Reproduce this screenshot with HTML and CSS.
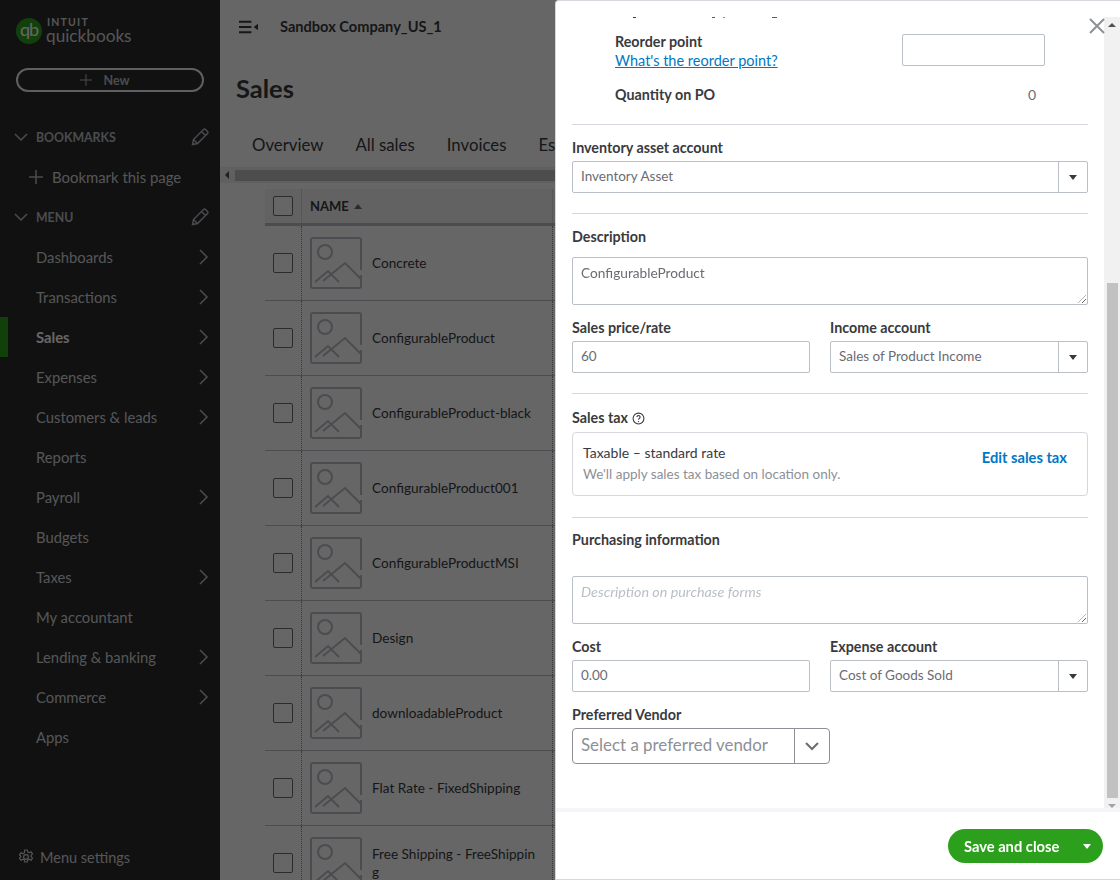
FILE: index.html
```html
<!DOCTYPE html>
<html lang="en">
<head>
    <meta charset="UTF-8">
    <title>Sales - QuickBooks</title>
    <link rel="stylesheet" href="styles.css">
</head>
<body>
    <svg class="defs" width="0" height="0">
        <symbol id="placeholder" viewBox="0 0 52 52">
            <path d="M51 33V3a2 2 0 0 0-2-2H3a2 2 0 0 0-2 2v46a2 2 0 0 0 2 2h46a2 2 0 0 0 2-2V38" fill="none" stroke="currentColor" stroke-width="2"/>
            <circle cx="15" cy="15" r="7" fill="none" stroke="currentColor" stroke-width="2"/>
            <path d="M5 45l13-11 11 11M13 44l22-18 16 16" fill="none" stroke="currentColor" stroke-width="2"/>
        </symbol>
        <symbol id="chev-right" viewBox="0 0 12 18">
            <path d="M2 2l7 7-7 7" fill="none" stroke="currentColor" stroke-width="1.500"/>
        </symbol>
        <symbol id="chev-down" viewBox="0 0 16 10">
            <path d="M2 2l6 6 6-6" fill="none" stroke="currentColor" stroke-width="1.500"/>
        </symbol>
        <symbol id="pencil" viewBox="0 0 18 18">
            <path d="M1.5 16.500l1-5L12.500 1.500a1.500 1.500 0 0 1 2 0l2 2a1.500 1.500 0 0 1 0 2L6.500 15.500zM2.500 11.500l4 4M10.500 3.500l4 4" fill="none" stroke="currentColor" stroke-width="1.400"/>
        </symbol>
    </svg>

    <div class="app">
        <nav class="sidebar">
            <div class="logo">
                <span class="logo-mark">qb</span>
                <div class="logo-text">
                    <span class="logo-intuit">INTUIT</span>
                    <span class="logo-name">quickbooks</span>
                </div>
            </div>
            <button class="new-button">
                <svg class="new-plus" viewBox="0 0 12 12"><path d="M6 0v12M0 6h12" fill="none" stroke="currentColor"/></svg>
                New
            </button>

            <div class="nav-head"><svg class="nav-down"><use href="#chev-down"/></svg><span>BOOKMARKS</span><svg class="nav-pencil"><use href="#pencil"/></svg></div>
            <div class="nav-bookmark">
                <svg class="bookmark-plus" viewBox="0 0 14 14"><path d="M7 0v14M0 7h14" fill="none" stroke="currentColor" stroke-width="1.500"/></svg>
                Bookmark this page
            </div>
            <div class="nav-head"><svg class="nav-down"><use href="#chev-down"/></svg><span>MENU</span><svg class="nav-pencil"><use href="#pencil"/></svg></div>

            <div class="nav-item">Dashboards<svg class="nav-arrow"><use href="#chev-right"/></svg></div>
            <div class="nav-item">Transactions<svg class="nav-arrow"><use href="#chev-right"/></svg></div>
            <div class="nav-item active">Sales<svg class="nav-arrow"><use href="#chev-right"/></svg></div>
            <div class="nav-item">Expenses<svg class="nav-arrow"><use href="#chev-right"/></svg></div>
            <div class="nav-item">Customers &amp; leads<svg class="nav-arrow"><use href="#chev-right"/></svg></div>
            <div class="nav-item">Reports</div>
            <div class="nav-item">Payroll<svg class="nav-arrow"><use href="#chev-right"/></svg></div>
            <div class="nav-item">Budgets</div>
            <div class="nav-item">Taxes<svg class="nav-arrow"><use href="#chev-right"/></svg></div>
            <div class="nav-item">My accountant</div>
            <div class="nav-item">Lending &amp; banking<svg class="nav-arrow"><use href="#chev-right"/></svg></div>
            <div class="nav-item">Commerce<svg class="nav-arrow"><use href="#chev-right"/></svg></div>
            <div class="nav-item">Apps</div>

            <div class="nav-settings">
                <svg class="gear" viewBox="0 0 16 16">
                    <circle cx="8" cy="8" r="2.400" fill="none" stroke="currentColor" stroke-width="1.200"/>
                    <path d="M6.700 1h2.600l.4 2 1.500.7 1.800-1 1.500 2.200-1.400 1.500v1.200l1.400 1.500-1.500 2.200-1.800-1-1.500.7-.4 2H6.700l-.4-2-1.500-.7-1.800 1-1.500-2.200 1.400-1.500V7.400L1.500 5.900 3 3.700l1.800 1 1.500-.7z" fill="none" stroke="currentColor" stroke-width="1.200" stroke-linejoin="round"/>
                </svg>
                Menu settings
            </div>
        </nav>

        <main class="content">
            <div class="topbar">
                <svg class="menu-toggle" viewBox="0 0 20 14">
                    <path d="M0 1.500h13M0 7h13M0 12.500h13" fill="none" stroke="currentColor" stroke-width="2"/>
                    <path d="M20 3.500v7L15.500 7z" fill="currentColor"/>
                </svg>
                <span class="company">Sandbox Company_US_1</span>
            </div>
            <h1 class="page-title">Sales</h1>
            <div class="tabs">
                <span>Overview</span>
                <span>All sales</span>
                <span>Invoices</span>
                <span>Es</span>
            </div>
            <div class="hscroll"><span class="hscroll-arrow"></span><span class="hscroll-thumb"></span></div>

            <div class="table">
                <div class="table-head">
                    <span class="cell-check"><span class="checkbox"></span></span>
                    <span class="cell-name">NAME <span class="sort-arrow"></span></span>
                </div>
                <div class="table-row"><span class="cell-check"><span class="checkbox"></span></span><span class="cell-name"><svg class="thumb"><use href="#placeholder"/></svg><span class="name-text">Concrete</span></span></div>
                <div class="table-row"><span class="cell-check"><span class="checkbox"></span></span><span class="cell-name"><svg class="thumb"><use href="#placeholder"/></svg><span class="name-text">ConfigurableProduct</span></span></div>
                <div class="table-row"><span class="cell-check"><span class="checkbox"></span></span><span class="cell-name"><svg class="thumb"><use href="#placeholder"/></svg><span class="name-text">ConfigurableProduct-black</span></span></div>
                <div class="table-row"><span class="cell-check"><span class="checkbox"></span></span><span class="cell-name"><svg class="thumb"><use href="#placeholder"/></svg><span class="name-text">ConfigurableProduct001</span></span></div>
                <div class="table-row"><span class="cell-check"><span class="checkbox"></span></span><span class="cell-name"><svg class="thumb"><use href="#placeholder"/></svg><span class="name-text">ConfigurableProductMSI</span></span></div>
                <div class="table-row"><span class="cell-check"><span class="checkbox"></span></span><span class="cell-name"><svg class="thumb"><use href="#placeholder"/></svg><span class="name-text">Design</span></span></div>
                <div class="table-row"><span class="cell-check"><span class="checkbox"></span></span><span class="cell-name"><svg class="thumb"><use href="#placeholder"/></svg><span class="name-text">downloadableProduct</span></span></div>
                <div class="table-row"><span class="cell-check"><span class="checkbox"></span></span><span class="cell-name"><svg class="thumb"><use href="#placeholder"/></svg><span class="name-text">Flat Rate - FixedShipping</span></span></div>
                <div class="table-row"><span class="cell-check"><span class="checkbox"></span></span><span class="cell-name"><svg class="thumb"><use href="#placeholder"/></svg><span class="name-text">Free Shipping - FreeShipping</span></span></div>
            </div>
        </main>
    </div>

    <div class="scrim"></div>

    <!-- Product edit drawer -->
    <aside class="drawer">
        <button class="close-button">
            <svg viewBox="0 0 16 16"><path d="M1 1l14 14M15 1L1 15" fill="none" stroke="currentColor" stroke-width="2"/></svg>
        </button>
        <div class="drawer-body">
            <form class="form">
                <!-- tails of the row scrolled out of view -->
                <div class="cut-line"><span class="tail tail-dark"></span><span class="tail tail-link"></span><span class="tail tail-gray"></span><span class="tail tail-end"></span></div>

                <div class="stock-row reorder-row">
                    <div>
                        <div class="stock-label">Reorder point</div>
                        <a class="link">What's the reorder point?</a>
                    </div>
                    <input class="input reorder-input" type="text">
                </div>
                <div class="stock-row po-row">
                    <div class="stock-label">Quantity on PO</div>
                    <span class="po-value">0</span>
                </div>

                <hr class="divider po-divider">

                <label class="label">Inventory asset account</label>
                <div class="select"><span class="select-value">Inventory Asset</span><span class="select-caret"></span></div>

                <hr class="divider">

                <label class="label desc-label">Description</label>
                <div class="textarea">ConfigurableProduct<span class="grip"></span></div>

                <div class="two-col">
                    <div>
                        <label class="label">Sales price/rate</label>
                        <input class="input" type="text" value="60">
                    </div>
                    <div>
                        <label class="label">Income account</label>
                        <div class="select"><span class="select-value">Sales of Product Income</span><span class="select-caret"></span></div>
                    </div>
                </div>

                <hr class="divider">

                <label class="label tax-label">Sales tax
                    <svg class="help" viewBox="0 0 12 12">
                        <circle cx="6" cy="6" r="5" fill="none" stroke="currentColor"/>
                        <path d="M4.500 4.700a1.500 1.500 0 1 1 2.300 1.300c-.5.300-.8.600-.8 1.100" fill="none" stroke="currentColor"/>
                        <circle cx="6" cy="8.800" r=".6" fill="currentColor"/>
                    </svg>
                </label>
                <div class="tax-box">
                    <div class="tax-text">
                        <div class="tax-title">Taxable – standard rate</div>
                        <div class="tax-note">We'll apply sales tax based on location only.</div>
                    </div>
                    <a class="tax-edit">Edit sales tax</a>
                </div>

                <hr class="divider tax-divider">

                <label class="label purchase-label">Purchasing information</label>
                <div class="textarea placeholder">Description on purchase forms<span class="grip"></span></div>

                <div class="two-col">
                    <div>
                        <label class="label">Cost</label>
                        <input class="input" type="text" value="0.00">
                    </div>
                    <div>
                        <label class="label">Expense account</label>
                        <div class="select"><span class="select-value">Cost of Goods Sold</span><span class="select-caret"></span></div>
                    </div>
                </div>

                <label class="label vendor-label">Preferred Vendor</label>
                <div class="combo">
                    <span class="combo-value">Select a preferred vendor</span>
                    <span class="combo-button"><svg viewBox="0 0 16 10"><path d="M2 2l6 6 6-6" fill="none" stroke="currentColor" stroke-width="2"/></svg></span>
                </div>
            </form>
            <div class="scrollbar">
                <span class="scroll-up"></span>
                <span class="scroll-thumb"></span>
                <span class="scroll-down"></span>
            </div>
        </div>
        <div class="drawer-foot">
            <div class="save-button">
                <span class="save-label">Save and close</span>
                <span class="save-caret"></span>
            </div>
        </div>
    </aside>
</body>
</html>
```

FILE: styles.css
```css
* {
    box-sizing: border-box;
}

body {
    margin: 0;
    height: 880px;
    overflow: hidden;
    font-family: Lato, "Noto Sans", sans-serif;
    font-size: 14px;
    color: #393a3d;
    background-color: #fff;
}

.defs {
    position: absolute;
}

.app {
    display: flex;
    height: 880px;
}

/* Sidebar */
.sidebar {
    width: 220px;
    flex-shrink: 0;
    display: flex;
    flex-direction: column;
    background-color: #2b2b2b;
    color: #d4d7dc;
}

.logo {
    display: flex;
    align-items: flex-start;
    gap: 4px;
    height: 46px;
    padding: 16px 0 0 16px;
}

.logo-mark {
    width: 26px;
    height: 26px;
    margin-top: 2px;
    border-radius: 50%;
    background-color: #2ca01c;
    color: #fff;
    font-size: 18px;
    line-height: 23px;
    text-align: center;
    letter-spacing: -1px;
}

.logo-text {
    display: flex;
    flex-direction: column;
    color: #d4d7dc;
}

.logo-intuit {
    font-size: 10.500px;
    line-height: 12px;
    letter-spacing: 1.200px;
    font-weight: 700;
    margin-left: 1px;
}

.logo-name {
    font-size: 17.200px;
    line-height: 16px;
}

.new-button {
    display: flex;
    align-items: center;
    justify-content: center;
    gap: 11px;
    width: 188px;
    height: 24px;
    margin: 22px 0 25px 16px;
    padding: 0 10px 0 0;
    border: 2px solid #eceef1;
    border-radius: 12px;
    background: none;
    color: #babec5;
    font-family: inherit;
    font-size: 12.500px;
    font-weight: 700;
}

.new-plus {
    width: 12px;
    height: 12px;
}

.nav-head {
    display: flex;
    align-items: center;
    height: 40px;
    padding-left: 13px;
    font-size: 12.300px;
    font-weight: 700;
    color: #babec5;
}

.nav-down {
    width: 16px;
    height: 10px;
    margin-right: 7px;
}

.nav-pencil {
    width: 18px;
    height: 18px;
    margin-left: auto;
    margin-right: 11px;
}

.nav-bookmark {
    display: flex;
    align-items: center;
    gap: 9px;
    height: 40px;
    padding-left: 29px;
    font-size: 14.900px;
}

.bookmark-plus {
    width: 14px;
    height: 14px;
    color: #babec5;
}

.nav-item {
    display: flex;
    align-items: center;
    height: 40px;
    padding-left: 36px;
    font-size: 14.800px;
}

.nav-item.active {
    border-left: 8px solid #2ca01c;
    padding-left: 28px;
    color: #fff;
    font-weight: 700;
}

.nav-arrow {
    width: 12px;
    height: 18px;
    margin-left: auto;
    margin-right: 10px;
    color: #babec5;
}

.nav-settings {
    display: flex;
    align-items: center;
    gap: 6px;
    height: 46px;
    margin-top: auto;
    padding-left: 18px;
    font-size: 14.500px;
}

.gear {
    width: 16px;
    height: 16px;
}

/* Sales page behind the drawer */
.content {
    flex: 1;
    min-width: 0;
    overflow: hidden;
}

.topbar {
    display: flex;
    align-items: center;
    gap: 22px;
    height: 54px;
    padding-left: 19px;
}

.menu-toggle {
    width: 19px;
    height: 14px;
    color: #393a3d;
}

.company {
    margin-top: -2px;
    font-size: 14.600px;
    font-weight: 700;
    color: #393a3d;
}

.page-title {
    margin: 18px 0 0 16px;
    font-size: 25.500px;
    line-height: 32px;
    font-weight: 700;
    color: #393a3d;
}

.tabs {
    display: flex;
    gap: 32px;
    height: 40px;
    margin: 29px 0 0 32px;
    font-size: 16.800px;
    line-height: 24px;
    white-space: nowrap;
}

.hscroll {
    display: flex;
    align-items: center;
    height: 16px;
    background-color: #f1f1f1;
    margin-top: -6px;
}

.hscroll-arrow {
    width: 0;
    height: 0;
    margin-left: 5px;
    border-top: 4px solid transparent;
    border-bottom: 4px solid transparent;
    border-right: 4px solid #505050;
}

.hscroll-thumb {
    flex: 1;
    height: 11px;
    margin-left: 6px;
    background-color: #c1c1c1;
}

.table {
    width: 340px;
    margin-left: 45px;
    margin-top: 6px;
}

.table-head,
.table-row {
    display: flex;
}

.table-head {
    height: 37px;
    background-color: #f4f5f8;
    border-bottom: 3px solid #babec5;
    font-size: 13px;
    font-weight: 700;
}

.table-row {
    height: 75px;
    border-bottom: 1px solid #babec5;
    font-size: 13.600px;
}

.cell-check {
    display: flex;
    align-items: center;
    width: 36px;
    padding-left: 8px;
}

.checkbox {
    width: 20px;
    height: 20px;
    border: 1px solid #6b6c72;
    border-radius: 2px;
    background-color: #fff;
}

.table-head .cell-name {
    border-left: 1px solid #d4d7dc;
    border-right: 1px solid #d4d7dc;
}

.cell-name {
    display: flex;
    align-items: center;
    width: 252px;
    padding-left: 8px;
    border-left: 1px dotted #8d9096;
    border-right: 1px dotted #8d9096;
}

.sort-arrow {
    width: 0;
    height: 0;
    margin-left: 5px;
    border-left: 4px solid transparent;
    border-right: 4px solid transparent;
    border-bottom: 5px solid #6b6c72;
}

.thumb {
    width: 52px;
    height: 52px;
    flex-shrink: 0;
    color: #babec5;
}

.name-text {
    width: 168px;
    margin-left: 10px;
    line-height: 18px;
    word-break: break-all;
}

.scrim {
    position: fixed;
    inset: 0;
    background-color: rgba(0, 0, 0, 0.6);
}

/* Drawer */
.drawer {
    position: fixed;
    top: 0;
    left: 555px;
    width: 565px;
    height: 880px;
    display: flex;
    flex-direction: column;
    background-color: #fff;
    border: 1px solid #d4d7dc;
    border-right: none;
    border-radius: 4px 0 0 0;
}

.close-button {
    position: absolute;
    top: 17px;
    right: 15px;
    width: 16px;
    height: 16px;
    padding: 0;
    border: none;
    background: none;
    color: #8d9096;
}

.drawer-body {
    flex: 1;
    min-height: 0;
    display: flex;
}

.form {
    flex: 1;
    min-width: 0;
    padding: 0 16px;
    overflow: hidden;
}

.cut-line {
    display: flex;
    height: 1px;
    margin-top: 16px;
}

.tail {
    height: 1px;
}

.tail-dark {
    width: 3px;
    margin-left: 61px;
    background-color: #393a3d;
}

.tail-link {
    width: 3px;
    margin-left: 76px;
    background-color: #0077c5;
}

.tail-gray {
    width: 2px;
    margin-left: 8px;
    background-color: #8d9096;
}

.tail-end {
    width: 5px;
    margin-left: 47px;
    background-color: #0077c5;
}

.stock-row {
    display: flex;
    justify-content: space-between;
    align-items: center;
    padding-left: 43px;
}

.reorder-row {
    height: 32px;
    margin-top: 16px;
    padding-right: 43px;
}

.reorder-row > div {
    margin-top: 2px;
}

.input.reorder-input {
    width: 143px;
}

.stock-label {
    font-size: 14.300px;
    font-weight: 700;
    line-height: 20px;
}

.link {
    display: block;
    font-size: 14.500px;
    line-height: 18px;
    color: #0077c5;
    text-decoration: underline;
}

.po-row {
    margin-top: 19px;
    padding-right: 52px;
    line-height: 20px;
}

.po-value {
    color: #6b6c72;
}

.divider {
    height: 1px;
    margin: 20px 0 0;
    border: none;
    background-color: #d4d7dc;
}

.divider.po-divider {
    margin-top: 19px;
}

.label {
    display: block;
    margin-top: 13px;
    height: 20px;
    margin-bottom: 3px;
    font-size: 14.300px;
    font-weight: 700;
    line-height: 20px;
}

.desc-label {
    margin-bottom: 10px;
    margin-top: 13px;
}

.select {
    display: flex;
    align-items: center;
    height: 32px;
    border: 1px solid #babec5;
    border-radius: 2px;
}

.select-value {
    flex: 1;
    padding: 0 0 2px 8px;
    font-size: 13.500px;
    color: #6b6c72;
}

.select-caret {
    position: relative;
    width: 29px;
    height: 30px;
    border-left: 1px solid #babec5;
}

.select-caret::after {
    content: "";
    position: absolute;
    left: 10px;
    top: 13px;
    border-left: 4px solid transparent;
    border-right: 4px solid transparent;
    border-top: 5px solid #393a3d;
}

.input {
    display: block;
    width: 100%;
    height: 32px;
    padding: 0 8px 2px;
    border: 1px solid #babec5;
    border-radius: 2px;
    font-family: inherit;
    font-size: 13.500px;
    color: #6b6c72;
}

.textarea {
    position: relative;
    height: 48px;
    padding: 7px 8px;
    border: 1px solid #babec5;
    border-radius: 2px;
    font-size: 13.700px;
    line-height: 16px;
    color: #6b6c72;
}

.textarea.placeholder {
    font-size: 14.300px;
    font-style: italic;
    color: #babec5;
}

/* resize handle in the corner */
.grip {
    position: absolute;
    right: 1px;
    bottom: 1px;
    width: 8px;
    height: 8px;
    background: repeating-linear-gradient(135deg, transparent 0, transparent 2px, #6b6c72 2px, #6b6c72 3px);
    clip-path: polygon(100% 0, 100% 100%, 0 100%);
}

.two-col {
    display: grid;
    grid-template-columns: 238px 258px;
    gap: 20px;
}

.two-col .label {
    margin-top: 13px;
}

.tax-label {
    display: flex;
    align-items: center;
    gap: 4px;
    margin-top: 14px;
    margin-bottom: 4px;
}

.help {
    width: 13px;
    height: 13px;
    color: #393a3d;
}

.tax-box {
    display: flex;
    justify-content: space-between;
    align-items: center;
    height: 64px;
    padding: 0 20px 0 10px;
    border: 1px solid #d4d7dc;
    border-radius: 4px;
}

.tax-text {
    margin-bottom: 2px;
}

.tax-title {
    line-height: 20px;
}

.tax-note {
    margin-top: 1px;
    font-size: 13.500px;
    line-height: 20px;
    color: #8d9096;
}

.tax-edit {
    margin-bottom: 14px;
    font-size: 14.700px;
    font-weight: 700;
    color: #0077c5;
}

.divider.tax-divider {
    margin-top: 21px;
}

.purchase-label {
    margin-top: 12px;
    margin-bottom: 26px;
}

.vendor-label {
    margin-top: 13px;
}

.combo {
    display: flex;
    width: 258px;
    height: 36px;
    border: 1px solid #8d9096;
    border-radius: 4px;
}

.combo-value {
    flex: 1;
    padding-left: 8px;
    font-size: 16.900px;
    line-height: 32px;
    color: #8d9096;
}

.combo-button {
    display: flex;
    align-items: center;
    justify-content: center;
    width: 35px;
    border-left: 1px solid #8d9096;
    color: #6b6c72;
}

.combo-button svg {
    width: 16px;
    height: 10px;
}

.scrollbar {
    display: flex;
    flex-direction: column;
    width: 16px;
    margin-top: 16px;
    background-color: #f1f1f1;
}

.scroll-up,
.scroll-down {
    width: 0;
    height: 0;
    margin: 6px auto 0;
    border-left: 4px solid transparent;
    border-right: 4px solid transparent;
}

.scroll-up {
    border-bottom: 4px solid #505050;
}

.scroll-thumb {
    width: 11px;
    height: 515px;
    margin: 256px auto 0;
    background-color: #c1c1c1;
}

.scroll-down {
    border-top: 4px solid #a3a3a3;
}

.drawer-foot {
    display: flex;
    justify-content: flex-end;
    align-items: center;
    height: 71px;
    padding-right: 17px;
    padding-top: 1px;
    border-top: 4px solid #f4f5f8;
}

.save-button {
    display: flex;
    align-items: center;
    justify-content: space-between;
    width: 155px;
    height: 34px;
    padding: 0 12px 0 16px;
    border-radius: 17px;
    background-color: #2ca01c;
    color: #fff;
    font-size: 14.700px;
    font-weight: 700;
}

.save-caret {
    border-left: 4px solid transparent;
    border-right: 4px solid transparent;
    border-top: 5px solid #fff;
}
```
